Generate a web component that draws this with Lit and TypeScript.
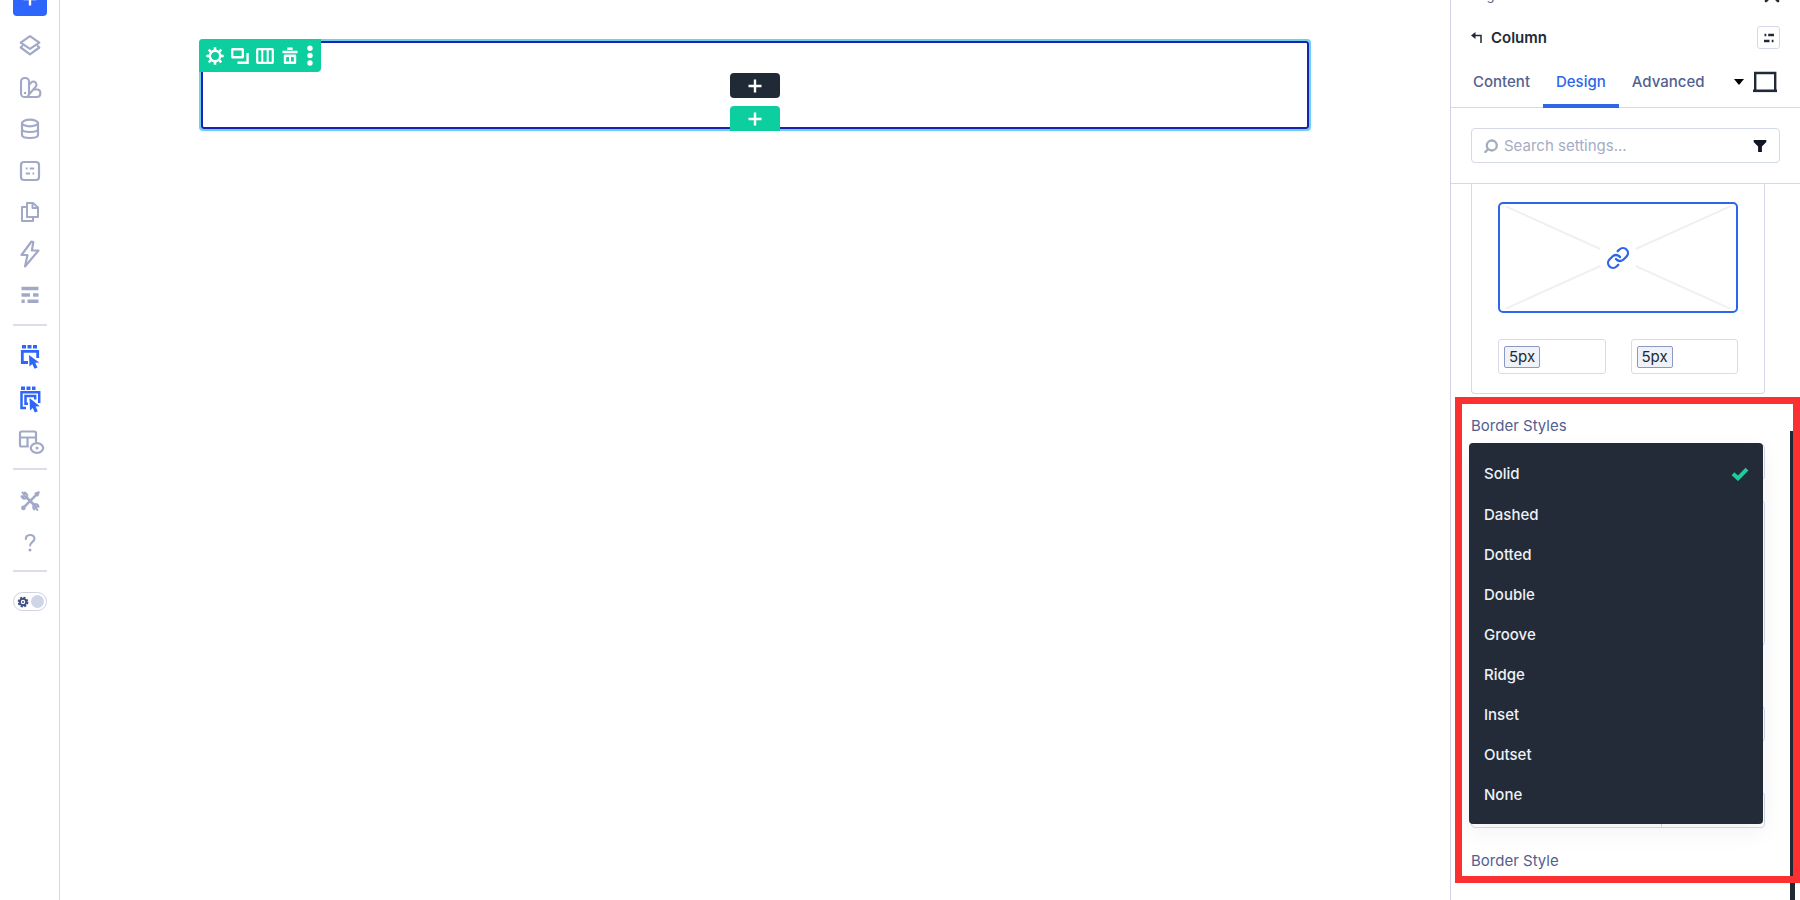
import { LitElement, html, css, svg } from "lit";
import { customElement, state } from "lit/decorators.js";
import { classMap } from "lit/directives/class-map.js";

const icon = (w: number, h: number, body: unknown) =>
  html`<svg width=${w} height=${h} viewBox="0 0 ${w} ${h}" fill="none" stroke="currentColor" stroke-width="2"
    stroke-linejoin="round" stroke-linecap="round" aria-hidden="true">${body}</svg>`;

const icons = {
  plus: icon(14, 14, svg`<path d="M7 .5v13M.5 7h13" stroke-linecap="butt" stroke-width="2.4"/>`),
  layers: icon(24, 24, svg`<path d="M12 2.200 21.300 8.600 12 14.800 2.700 8.600Z" stroke-width="2.200"/><path d="M4.200 12 2.700 13.500 12 20.400l9.300-6.900-1.500-1.500" stroke-width="2.200"/>`),
  swatches: icon(24, 24, svg`<g stroke-width="2.100"><rect x="3" y="2" width="8" height="19" rx="3.600"/><path d="M11 9l2.400-2.600c1.700-1.800 5-.5 5 2.200 0 .9-.3 1.700-.9 2.400L11 18.500M7.500 21H19c4.300 0 4.300-6.500 1-7.500h-4.600"/></g><circle cx="7" cy="17" r="1.200" fill="currentColor" stroke="none"/>`),
  database: icon(24, 24, svg`<g stroke-width="2.200"><ellipse cx="12" cy="6" rx="8" ry="3.300"/><path d="M4 6v12c0 4 16 4 16 0V6M4 12c0 4 16 4 16 0"/></g>`),
  form: icon(24, 24, svg`<rect x="3" y="3" width="18" height="18" rx="3" stroke-width="2.200"/><path d="M7.800 9.500h1.800M11.800 9.500H16.200M7.800 14.500h4.200M14.500 14.500h1.700" stroke-linecap="butt"/>`),
  copy: icon(24, 24, svg`<g stroke-width="2"><path d="M9 3h6l5 4.500V17H9Z"/><path d="M14.500 3v5H20"/><path d="M9 7H4v14h11v-4"/></g>`),
  bolt: icon(24, 28, svg`<path d="M13.500 1.500 3.500 15h6L7 26.500 20.500 10.500h-6.600l1.400-8.500Z" stroke-width="2.200"/>`),
  bars: icon(24, 24, svg`<path d="M3.500 5.500h17M3.500 12h8.500M15 12h5.500M3.500 18.300h3.200M9.500 18.300h11" stroke-width="3.400" stroke-linecap="butt"/>`),
  select: icon(24, 28, svg`<g stroke-linecap="butt" stroke-linejoin="miter"><path d="M4 3.700h4M9.500 3.700h4M15 3.700h4" stroke-width="3.600"/><path d="M10 19.500H4.300V8.300h15.400V15" stroke-width="2.800"/></g><path d="m11 12 .5 11.500 2.800-2.600 2.200 4.900 3-1.300-2.300-4.700 4-.4Z" fill="currentColor" stroke="none"/>`),
  selectAll: icon(24, 28, svg`<g stroke-linecap="butt" stroke-linejoin="miter"><path d="M3 3.200h4M8.500 3.200h4M14 3.200h3.500" stroke-width="3.400"/><path d="M8 23H3.500V7.200h17.700V18" stroke-width="2.500"/><path d="M10 18.700H7.500V11h9.700v3.500" stroke-width="2.500"/></g><path d="m11.500 13 .5 12.500 2.800-2.600 2 4.600 3-1.300-2.200-4.600 4.200-.4Z" fill="currentColor" stroke="none"/>`),
  layoutView: icon(28, 26, svg`<g stroke-width="2.200"><path d="M12 18.500H5.500a1.500 1.500 0 0 1-1.500-1.500V5a1.500 1.500 0 0 1 1.500-1.500h13A1.500 1.500 0 0 1 20 5v8.500M4 9.500h16M11.500 9.500v9"/><ellipse cx="21" cy="20" rx="6.200" ry="4.800"/></g><circle cx="21" cy="20" r="1.500" fill="currentColor" stroke="none"/>`),
  tools: icon(24, 24, svg`<path d="M8 8 17 16.700" stroke-width="2.800"/><path d="M4.500 3.500 6.600 6 6 7.600 3.500 7.200c.3 2.300 3.300 3.300 4.900 1.700 1.500-1.700.700-4.600-1.600-5.400M16.300 20.500c-1.500-1.200-1.500-4.200.200-5.200 1.700-.800 3.900.4 4 2.400l-2.300-.3-.8 1.300 1.900 2.200" stroke-width="2"/><path d="M19.500 4.700 5.500 18.700" stroke-width="2.600"/><path d="M17.500 4.500 20.800 3.200 19.600 6.500Z" fill="currentColor"/><circle cx="5.400" cy="18.900" r="2.300" fill="currentColor" stroke="none"/>`),
  help: icon(24, 24, svg`<path d="M7.800 8c0-5 8.700-5.300 8.700-.5 0 3.700-4.400 3.500-4.400 7" stroke-width="2.100"/><circle cx="12" cy="19" r="1.500" fill="currentColor" stroke="none"/>`),
  gear: icon(18, 18, svg`<circle cx="9" cy="9" r="5.200" stroke-width="2.400"/><path d="M9 .3v3M9 14.700v3M.3 9h3M14.700 9h3M2.700 2.700l2.200 2.200M13.100 13.100l2.200 2.200M15.300 2.700l-2.200 2.200M4.900 13.100l-2.200 2.200" stroke-width="2.600" stroke-linecap="butt"/>`),
  duplicate: icon(18, 18, svg`<rect x="1.200" y="2.200" width="10.600" height="8" rx=".5" stroke-width="2.400"/><path d="M16.600 6v9.800H6.500" stroke-width="2.400" stroke-linecap="butt" stroke-linejoin="miter"/>`),
  columns: icon(18, 18, svg`<rect x="1.200" y="2.200" width="15.600" height="13.600" rx=".5" stroke-width="2.200"/><path d="M6.300 2v14M11.700 2v14"/>`),
  trash: icon(18, 18, svg`<path d="M1.500 5h15M6.300 1.800h5.400" stroke-width="2.600" stroke-linecap="butt"/><path d="M4 8.700v7.100h10V8.700Z" stroke-width="2.400"/><path d="M9 9v7" stroke-width="2"/>`),
  dots: icon(8, 22, svg`<g fill="currentColor" stroke="none"><circle cx="4" cy="3.300" r="2.700"/><circle cx="4" cy="10.500" r="2.700"/><circle cx="4" cy="18" r="2.700"/></g>`),
  back: icon(12, 12, svg`<path d="M2.500 3.500h7.500V11" stroke-width="1.500" stroke-linecap="butt" stroke-linejoin="miter"/><path d="M0 3.500 4.500 0v7Z" fill="currentColor" stroke="none"/>`),
  options: icon(12, 12, svg`<path d="M1.500 3h1.800M5.200 3h5.800M1 9h5.500M8.700 9h1.800" stroke-width="2.400" stroke-linecap="butt"/>`),
  close: icon(16, 16, svg`<path d="M2 2l12 12M14 2 2 14" stroke-width="2.600"/>`),
  laptop: icon(26, 22, svg`<path d="M3.200 19.500V2h20v17.500" stroke-linejoin="miter" stroke-width="2.400"/><path d="M1 19.800h24" stroke-linecap="butt" stroke-width="2.600"/>`),
  search: icon(14, 14, svg`<circle cx="7.800" cy="6.500" r="5" stroke-width="2.300"/><path d="M4.300 10 1.300 13" stroke-width="2.400"/>`),
  filter: icon(14, 14, svg`<path d="M.7 1h12.600v2L8.900 7.600v5.400H5.100V7.600L.7 3Z" fill="currentColor" stroke="none"/>`),
  link: icon(24, 24, svg`<path d="M10 13a5 5 0 0 0 7.540.540l3-3a5 5 0 0 0-7.070-7.070l-1.720 1.710" stroke-width="2.300"/><path d="M14 11a5 5 0 0 0-7.540-.540l-3 3a5 5 0 0 0 7.070 7.070l1.710-1.710" stroke-width="2.300"/>`),
  check: icon(18, 14, svg`<path d="M2 6.700 7 11.300 16 2.200" stroke-width="4" stroke-linecap="butt" stroke-linejoin="miter"/>`),
  sun: icon(12, 12, svg`<circle cx="6" cy="6" r="3.200" stroke-width="2"/><circle cx="6" cy="6" r="4.600" stroke-width="1.600" stroke-dasharray="2.200 1.400" stroke-linecap="butt"/><circle cx="6" cy="6" r="1" fill="currentColor" stroke="none"/>`),
};

@customElement("side-rail")
class SideRail extends LitElement {
  static styles = css`
    :host { display: block; flex: none; width: 59px; border-right: 1px solid #d3d6e4; overflow: hidden; }
    .rail { display: flex; flex-direction: column; align-items: center; margin-top: -18px; }
    button { display: grid; place-items: center; border: 0; padding: 0; background: none; color: #a2a9c7; width: 34px; height: 34px; cursor: pointer; }
    svg { display: block; overflow: visible; }
    .add { background: #2e66fb; color: #fff; border-radius: 4px; }
    .group { display: flex; flex-direction: column; align-items: center; gap: 8px; padding: 14px 0 10px; }
    .main { gap: 0; justify-content: space-between; height: 283px; padding-top: 13px; padding-bottom: 12px; }
    .group + .group, .foot { border-top: 2px solid #dcdfe9; }
    .active { color: #2e66fb; }
    .foot { width: 34px; display: flex; justify-content: center; padding-top: 20px; }
    .switch { display: flex; align-items: center; justify-content: space-between; box-sizing: border-box; width: 34px; height: 19px; padding: 0 2px 0 3px; border: 1px solid #cfd3e0; border-radius: 10px; color: #3f4f85; }
    .knob { width: 13px; height: 13px; border-radius: 50%; background: #cfd5e6; }
  `;
  private item(label: string, glyph: unknown, active = false) {
    return html`<button class=${classMap({ active })} aria-label=${label}>${glyph}</button>`;
  }
  render() {
    return html`<nav class="rail">
      <button class="add" aria-label="Add">${icons.plus}</button>
      <div class="group main">
        ${this.item("Layers", icons.layers)} ${this.item("Presets", icons.swatches)}
        ${this.item("Variables", icons.database)} ${this.item("Forms", icons.form)}
        ${this.item("Pages", icons.copy)} ${this.item("Interactions", icons.bolt)}
        ${this.item("History", icons.bars)}
      </div>
      <div class="group">
        ${this.item("Select", icons.select, true)} ${this.item("Select all", icons.selectAll, true)}
        ${this.item("Layout view", icons.layoutView)}
      </div>
      <div class="group">${this.item("Tools", icons.tools)} ${this.item("Help", icons.help)}</div>
      <div class="foot"><button class="switch" role="switch" aria-checked="false" aria-label="Dark mode">${icons.sun}<span class="knob"></span></button></div>
    </nav>`;
  }
}

@customElement("page-canvas")
class PageCanvas extends LitElement {
  static styles = css`
    :host { display: block; flex: 1; min-width: 0; padding: 39px 139px 0; background: #fff; }
    .column { position: relative; box-sizing: border-box; height: 92px; border: 2px solid #6ad3e6; border-radius: 4px; }
    .edge { box-sizing: border-box; height: 100%; border: 2px solid #1a1fb8; border-radius: 3px; display: flex; flex-direction: column; align-items: center; gap: 8px; padding-top: 30px; }
    button { display: grid; place-items: center; border: 0; padding: 0; background: none; color: #fff; cursor: pointer; }
    svg { display: block; }
    .tools { position: absolute; left: -2px; top: -2px; display: flex; align-items: center; gap: 7px; height: 33px; padding: 0 7px; border-radius: 4px 0 4px 0; background: #0dce9e; }
    .add { flex: none; width: 50px; height: 25px; border-radius: 4px; background: #202a37; }
    .green { background: #0dce9e; border-radius: 4px 4px 0 0; }
  `;
  render() {
    return html`<section class="column" aria-label="Column">
      <div class="edge">
        <button class="add" aria-label="Add module">${icons.plus}</button>
        <button class="add green" aria-label="Add row">${icons.plus}</button>
      </div>
      <div class="tools" role="toolbar">
        <button aria-label="Settings">${icons.gear}</button>
        <button aria-label="Duplicate">${icons.duplicate}</button>
        <button aria-label="Column structure">${icons.columns}</button>
        <button aria-label="Delete">${icons.trash}</button>
        <button aria-label="More">${icons.dots}</button>
      </div>
    </section>`;
  }
}

@customElement("settings-panel")
class SettingsPanel extends LitElement {
  static styles = css`
    :host { position: relative; display: flex; flex-direction: column; flex: none; width: 349px; border-left: 1px solid #d0d4e2; overflow: hidden; background: #fff; color: #53618f; font-size: 15px; line-height: 20px; }
    button { border: 0; padding: 0; margin: 0; background: none; font: inherit; color: inherit; cursor: pointer; }
    svg { display: block; }
    .title { display: flex; justify-content: space-between; align-items: flex-end; height: 20px; margin-top: -17px; padding: 0 20px; font-size: 13px; line-height: 16px; }
    .title button { color: #202a37; }
    .crumb { display: flex; align-items: center; gap: 8px; padding: 23px 20px 0; color: #202a37; }
    .crumb h2 { flex: 1; margin: 0; font-size: 15px; font-weight: 600; }
    .opts { display: grid; place-items: center; box-sizing: border-box; width: 23px; height: 23px; border: 1px solid #d5d8e6; border-radius: 3px; }
    .tabs { display: flex; align-items: stretch; height: 51px; margin-top: 7px; padding: 0 22px 0 9px; border-bottom: 1px solid #d5d8e6; font-weight: 500; }
    .tabs [role="tab"] { padding: 0 13px; margin-bottom: -1px; }
    .tabs [aria-selected="true"] { color: #2e66e8; box-shadow: inset 0 -4px #2e66e8; }
    .device { display: flex; align-items: center; gap: 8px; margin-left: auto; color: #202a37; }
    .caret { border: 5px solid transparent; border-top: 6px solid #000; border-bottom: 0; }
    .find { padding: 20px 20px 20px; border-bottom: 1px solid #d5d8e6; }
    .box { display: flex; align-items: center; gap: 6px; box-sizing: border-box; height: 35px; padding: 0 12px; border: 1px solid #d5d8e6; border-radius: 4px; color: #a2aebd; }
    .box input { flex: 1; min-width: 0; border: 0; padding: 0; outline: 0; background: none; font: inherit; color: inherit; }
    .box input::placeholder { color: #a5acc4; opacity: 1; }
    .box button { color: #101722; }
    .card { margin: 0 35px 0 20px; padding: 18px 26px 19px; border: 1px solid #d5d8e6; border-top: 0; border-radius: 0 0 4px 4px; }
    .preview { position: relative; display: grid; place-items: center; box-sizing: border-box; width: 100%; height: 111px; border: 2px solid #2e66e8; border-radius: 5px; color: #2e66e8; }
    .cross { position: absolute; inset: 2px 5px; width: calc(100% - 10px); height: calc(100% - 4px); }
    .radii { display: grid; grid-template-columns: 1fr 1fr; gap: 25px; margin-top: 26px; }
    .field { display: flex; align-items: center; box-sizing: border-box; height: 35px; padding: 0 5px; border: 1px solid #d9dce8; border-radius: 3px; }
    .field input { box-sizing: border-box; width: 36px; height: 22px; padding: 0; border: 1px solid #8d99c0; border-radius: 2px; background: #eff2f9; color: #202a37; font: inherit; text-align: center; }
    .frame { position: relative; z-index: 2; box-sizing: border-box; height: 486px; margin: 3px 0 0 4px; padding: 12px 28px 0 9px; border: 7px solid #fb3131; }
    .label { display: block; line-height: 20px; }
    .under { display: flex; flex-direction: column; height: 384px; margin-top: 8px; }
    .ghost { box-sizing: border-box; height: 36px; border: 1px solid #d5d8e6; border-radius: 4px; }
    .tall { height: 146px; margin: 20px 0 60px; }
    .split { margin-top: auto; display: grid; grid-template-columns: 189px 1fr; }
    .split i + i { border-left: 1px solid #d5d8e6; }
    .next { margin-top: 23px; }
    .menu { position: absolute; left: 7px; right: 30px; top: 39px; margin: 0; padding: 10px 0 9px; list-style: none; border-radius: 4px; background: #222b37; color: #eef1f6; font-weight: 500; box-shadow: 0 8px 24px rgba(32, 42, 55, .06); }
    .menu li { display: flex; align-items: center; justify-content: space-between; height: 40px; padding: 0 14px 0 15px; cursor: pointer; }
    .menu li:first-child { height: 42px; }
    .menu svg { color: #1bcf9d; }
    .scroll { position: absolute; right: 5px; top: 431px; bottom: 0; width: 5px; background: #202a37; }
  `;
  @state() private value = "Solid";
  private options = ["Solid", "Dashed", "Dotted", "Double", "Groove", "Ridge", "Inset", "Outset", "None"];
  render() {
    return html`
      <header class="title"><span>Page</span><button aria-label="Close">${icons.close}</button></header>
      <div class="crumb">
        <button aria-label="Back">${icons.back}</button>
        <h2>Column</h2>
        <button class="opts" aria-label="Options">${icons.options}</button>
      </div>
      <div class="tabs" role="tablist">
        <button role="tab" aria-selected="false">Content</button>
        <button role="tab" aria-selected="true">Design</button>
        <button role="tab" aria-selected="false">Advanced</button>
        <button class="device" aria-label="Device"><span class="caret"></span>${icons.laptop}</button>
      </div>
      <div class="find">
        <div class="box">${icons.search}
          <input type="search" aria-label="Search settings" placeholder="Search settings..." />
          <button aria-label="Filter">${icons.filter}</button>
        </div>
      </div>
      <div class="card">
        <button class="preview" aria-label="Link corners">
          <svg class="cross" viewBox="0 0 230 103" preserveAspectRatio="none" stroke="#f0f0f2" stroke-width="2">
            <path d="M0 0 97 43M133 43 230 0M0 103 97 60M133 60l97 43" />
          </svg>
          ${icons.link}
        </button>
        <div class="radii">
          <div class="field"><input aria-label="Bottom left radius" value="5px" /></div>
          <div class="field"><input aria-label="Bottom right radius" value="5px" /></div>
        </div>
      </div>
      <section class="frame">
        <span class="label" id="styles">Border Styles</span>
        <div class="under">
          <div class="ghost"></div>
          <div class="ghost tall"></div>
          <div class="ghost"></div>
          <div class="ghost split"><i></i><i></i></div>
        </div>
        <span class="label next">Border Style</span>
        <ul class="menu" role="listbox" aria-labelledby="styles">
          ${this.options.map(
            (o) => html`<li role="option" aria-selected=${o === this.value} @click=${() => (this.value = o)}>
              ${o}${o === this.value ? icons.check : ""}
            </li>`
          )}
        </ul>
      </section>
      <div class="scroll"></div>
    `;
  }
}

@customElement("app-root")
class AppRoot extends LitElement {
  static styles = css`
    :host { display: flex; height: 100vh; overflow: hidden; background: #fff; font-family: Inter, "Liberation Sans", sans-serif; }
  `;
  render() {
    return html`<side-rail></side-rail><page-canvas></page-canvas><settings-panel></settings-panel>`;
  }
}
